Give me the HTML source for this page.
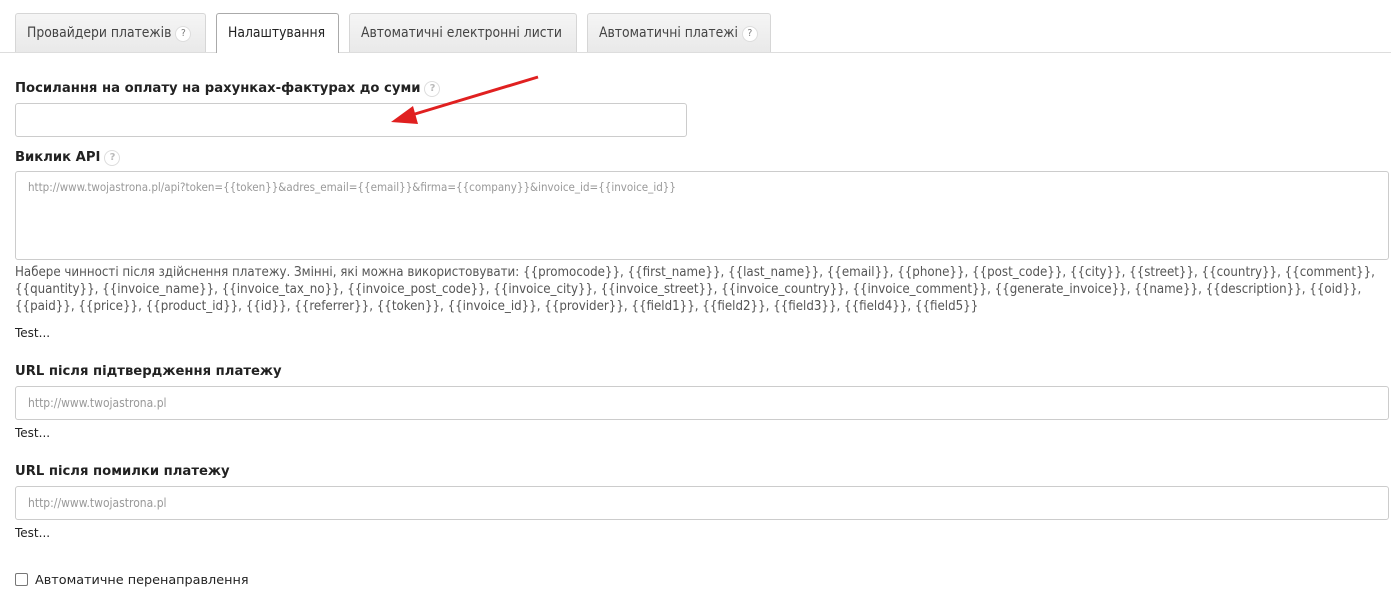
<!DOCTYPE html>
<html><head><meta charset="utf-8"><style>
body{margin:0;width:1391px;height:593px;background:#fff;position:relative;overflow:hidden;font-family:"DejaVu Sans","Liberation Sans",sans-serif;color:#222}
.tab{position:absolute;top:13px;height:39px;box-sizing:border-box;border:1px solid #d6d6d6;border-bottom:none;background:linear-gradient(#f5f5f5,#e9e9e9);border-radius:3px 3px 0 0;font-family:"DejaVu Sans Condensed","DejaVu Sans",sans-serif;font-size:13.8px;color:#444;line-height:38px;padding-left:11px;white-space:nowrap}
.tab.act{background:#fff;border:1px solid #aaa;border-bottom:none;height:40px;color:#222;z-index:2}
.q{display:inline-block;width:14px;height:14px;border-radius:50%;border:1px solid #ddd;background:#fff;font-size:10px;line-height:14px;text-align:center;color:#777;vertical-align:1px;margin-left:4px}
.q.l{color:#bbb}
.line{position:absolute;left:0;right:0;top:52px;border-top:1px solid #ddd}
.lbl{position:absolute;left:15px;font-weight:bold;font-size:13.2px;color:#222;white-space:nowrap}
.in{position:absolute;left:15px;box-sizing:border-box;border:1px solid #ccc;border-radius:3px;background:#fff;font-family:"DejaVu Sans Condensed",sans-serif;font-size:12px;color:#999;padding-left:12px}
.help{position:absolute;left:15px;font-family:"DejaVu Sans Condensed",sans-serif;font-size:13.2px;color:#555;line-height:17px;white-space:nowrap}
.t{position:absolute;left:15px;font-size:12px;color:#222}
</style></head><body>
<div class="tab" style="left:15px;width:191px">Провайдери платежів<span class="q">?</span></div>
<div class="tab act" style="left:216px;width:123px">Налаштування</div>
<div class="tab" style="left:349px;width:228px">Автоматичні електронні листи</div>
<div class="tab" style="left:587px;width:184px">Автоматичні платежі<span class="q">?</span></div>
<div class="line"></div>

<div class="lbl" style="top:81px">Посилання на оплату на рахунках-фактурах до суми<span class="q l">?</span></div>
<div class="in" style="top:103px;width:672px;height:34px"></div>
<svg style="position:absolute;left:385px;top:72px" width="160" height="56"><line x1="153" y1="5" x2="20" y2="45" stroke="#e02020" stroke-width="3"/><polygon points="6,50 28,34 33,52" fill="#e02020"/></svg>

<div class="lbl" style="top:150px">Виклик API<span class="q l">?</span></div>
<div class="in" style="top:171px;width:1374px;height:89px;padding-top:8px;line-height:14px;font-size:11.5px">http://www.twojastrona.pl/api?token={{token}}&amp;adres_email={{email}}&amp;firma={{company}}&amp;invoice_id={{invoice_id}}</div>

<div class="help" style="top:264px">Наберe чинності після здійснення платежу. Змінні, які можна використовувати: {{promocode}}, {{first_name}}, {{last_name}}, {{email}}, {{phone}}, {{post_code}}, {{city}}, {{street}}, {{country}}, {{comment}},<br>{{quantity}}, {{invoice_name}}, {{invoice_tax_no}}, {{invoice_post_code}}, {{invoice_city}}, {{invoice_street}}, {{invoice_country}}, {{invoice_comment}}, {{generate_invoice}}, {{name}}, {{description}}, {{oid}},<br>{{paid}}, {{price}}, {{product_id}}, {{id}}, {{referrer}}, {{token}}, {{invoice_id}}, {{provider}}, {{field1}}, {{field2}}, {{field3}}, {{field4}}, {{field5}}</div>
<div class="t" style="top:326px">Test...</div>

<div class="lbl" style="top:364px">URL після підтвердження платежу</div>
<div class="in" style="top:386px;width:1374px;height:34px;line-height:32px">http://www.twojastrona.pl</div>
<div class="t" style="top:426px">Test...</div>

<div class="lbl" style="top:464px">URL після помилки платежу</div>
<div class="in" style="top:486px;width:1374px;height:34px;line-height:32px">http://www.twojastrona.pl</div>
<div class="t" style="top:526px">Test...</div>

<div style="position:absolute;left:15px;top:573px;width:11px;height:11px;border:1px solid #777;border-radius:2px"></div>
<div class="t" style="left:35px;top:573px;font-size:12.8px">Автоматичне перенаправлення</div>
</body></html>
